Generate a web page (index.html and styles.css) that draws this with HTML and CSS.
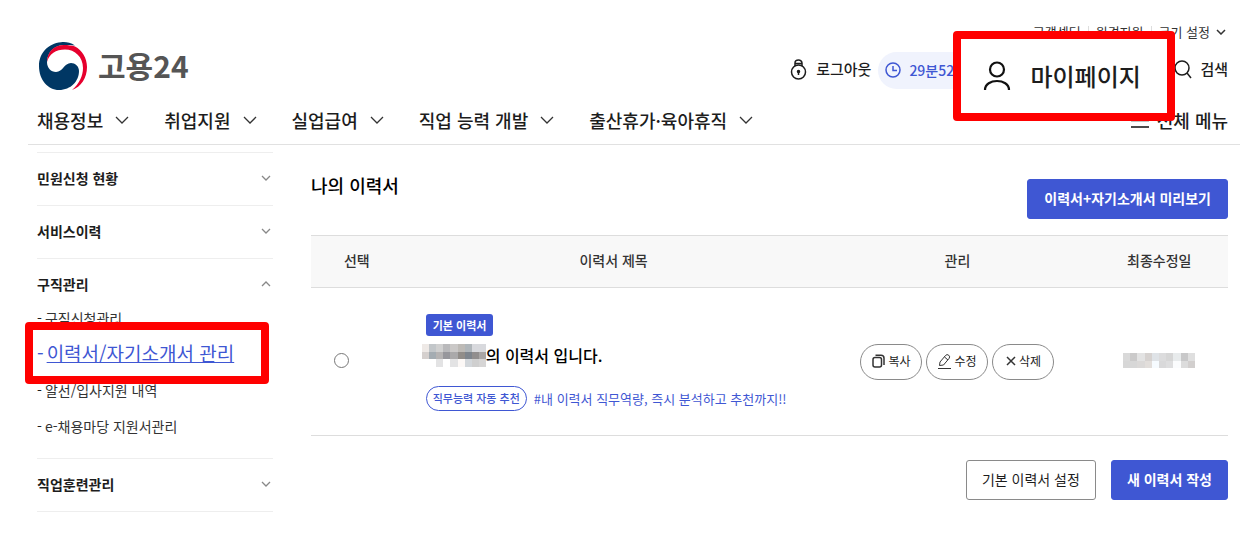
FILE: index.html
```html
<!DOCTYPE html>
<html lang="ko">
<head>
  <meta charset="UTF-8">
  <meta name="viewport" content="width=device-width, initial-scale=1.0">
  <title>고용24 - 이력서/자기소개서 관리</title>

  <link rel="stylesheet" href="styles.css">

</head>
<body>
  <header class="header">
    <ul class="util">
      <li><a href="#">고객센터</a></li>
      <li><a href="#">원격지원</a></li>
      <li>
        <button type="button" class="util-size">크기 설정
          <svg width="10" height="6" viewBox="0 0 10 6"><path d="M1 1l4 4 4-4"/></svg>
        </button>
      </li>
    </ul>

    <div class="header-main">
      <a href="#" class="logo">
        <svg width="48" height="48" viewBox="0 0 48 48">
          <path fill="#003764" d="M36 3.500C31 0 26-.2 22 .2 9 1.500 0 11 0 24c0 14 9 24 20 24 12 0 20-9 20-19 0-5-4-8-8-8-7 0-8 9-15 9-5 0-9-4-9-10C8 10 16 3 25 3c4 0 8 0 11 .5z"/>
          <path fill="#e6002d" d="M8 20C8 10 15 3 25 3c4 0 8 .5 11 1.500C43 8 48 16 48 25c0 11-6 20-15 23 7-6 11-14 11-22C44 15 36 7.500 26 7.500 17 7.500 10 12 8 20z"/>
        </svg>
        <span>고용24</span>
      </a>

      <ul class="tools">
        <li>
          <a href="#" class="tool">
            <svg class="line" width="17" height="21" viewBox="0 0 17 21"><circle cx="8.500" cy="13" r="7"/><path d="M5 7V4a3.500 3 0 0 1 7 0v3M5 4.500h7M8.500 13v3"/><circle cx="8.500" cy="12.500" r="1" fill="#1d1d1d"/></svg>
            로그아웃
          </a>
        </li>
        <li class="timer">
          <svg width="16" height="16" viewBox="0 0 16 16"><circle cx="8" cy="8" r="7"/><path d="M8 4v4.500h4"/></svg>
          <span>29분52초</span>
        </li>
        <li class="mypage">
          <a href="#" class="marker mypage-link">
            <svg width="28" height="30" viewBox="0 0 28 30"><circle cx="14" cy="8.500" r="7"/><path d="M2 29c0-12 24-12 24 0"/></svg>
            마이페이지
          </a>
        </li>
        <li>
          <a href="#" class="tool search">
            <svg class="line" width="17" height="19" viewBox="0 0 17 19"><circle cx="7" cy="8" r="7"/><path d="M12 13l4 5"/></svg>
            검색
          </a>
        </li>
      </ul>
    </div>

    <nav class="gnb">
      <a href="#">채용정보 <svg width="14" height="8" viewBox="0 0 14 8"><path d="M1 1l6 6 6-6"/></svg></a>
      <a href="#">취업지원 <svg width="14" height="8" viewBox="0 0 14 8"><path d="M1 1l6 6 6-6"/></svg></a>
      <a href="#">실업급여 <svg width="14" height="8" viewBox="0 0 14 8"><path d="M1 1l6 6 6-6"/></svg></a>
      <a href="#">직업 능력 개발 <svg width="14" height="8" viewBox="0 0 14 8"><path d="M1 1l6 6 6-6"/></svg></a>
      <a href="#">출산휴가·육아휴직 <svg width="14" height="8" viewBox="0 0 14 8"><path d="M1 1l6 6 6-6"/></svg></a>
      <button type="button" class="all-menu">
        <svg width="18" height="16" viewBox="0 0 18 16"><path d="M0 2h18M0 8.500h18M0 15h18"/></svg>
        전체 메뉴
      </button>
    </nav>
  </header>

  <div class="page">
    <aside class="side">
      <div class="side-group">
        <button type="button" class="side-title">민원신청 현황 <svg width="10" height="6" viewBox="0 0 10 6"><path d="M1 1l4 4 4-4"/></svg></button>
      </div>
      <div class="side-group">
        <button type="button" class="side-title">서비스이력 <svg width="10" height="6" viewBox="0 0 10 6"><path d="M1 1l4 4 4-4"/></svg></button>
      </div>
      <div class="side-group">
        <button type="button" class="side-title">구직관리 <svg width="10" height="6" viewBox="0 0 10 6"><path d="M1 5l4-4 4 4"/></svg></button>
        <ul class="side-list">
          <li><a href="#">구직신청관리</a></li>
          <li class="current"><div class="marker side-marker"><a href="#">이력서/자기소개서 관리</a></div></li>
          <li><a href="#">알선/입사지원 내역</a></li>
          <li><a href="#">e-채용마당 지원서관리</a></li>
        </ul>
      </div>
      <div class="side-group">
        <button type="button" class="side-title">직업훈련관리 <svg width="10" height="6" viewBox="0 0 10 6"><path d="M1 1l4 4 4-4"/></svg></button>
      </div>
    </aside>

    <main class="content">
      <div class="content-head">
        <h2>나의 이력서</h2>
        <button type="button" class="btn btn-primary">이력서+자기소개서 미리보기</button>
      </div>

      <table class="resume-table">
        <colgroup>
          <col class="col-select">
          <col class="col-title">
          <col class="col-manage">
          <col class="col-date">
        </colgroup>
        <thead>
          <tr>
            <th>선택</th>
            <th>이력서 제목</th>
            <th>관리</th>
            <th>최종수정일</th>
          </tr>
        </thead>
        <tbody>
          <tr>
            <td class="cell-select"><input type="radio" name="resume" aria-label="이력서 선택"></td>
            <td class="cell-title">
              <span class="badge">기본 이력서</span>
              <p class="resume-name">
                <svg width="64" height="23" viewBox="0 0 9 3" preserveAspectRatio="none" shape-rendering="crispEdges">
                  <path fill="#eee9e6" d="M0 0h1v1h-1z"/><path fill="#c2c6c9" d="M1 0h1v1h-1z"/><path fill="#d0d0d0" d="M2 0h1v1h-1z"/><path fill="#b9b9bb" d="M3 0h1v1h-1z"/><path fill="#cac8c7" d="M4 0h1v1h-1z"/><path fill="#bdbab6" d="M5 0h1v1h-1z"/><path fill="#b0b6ba" d="M6 0h1v1h-1z"/><path fill="#d8d9dd" d="M7 0h2v1h-2z"/>
                  <path fill="#d5d0ce" d="M0 1h1v1h-1z"/><path fill="#a4acb2" d="M1 1h1v1h-1z"/><path fill="#b5b3b3" d="M2 1h1v1h-1z"/><path fill="#97979c" d="M3 1h1v1h-1z"/><path fill="#aaa9aa" d="M4 1h1v1h-1z"/><path fill="#918d89" d="M5 1h1v1h-1z"/><path fill="#7e858d" d="M6 1h1v1h-1z"/><path fill="#918e8e" d="M7 1h1v1h-1z"/><path fill="#a9a6a5" d="M8 1h1v1h-1z"/>
                  <path fill="#e3e3e4" d="M2 2h1v1h-1zM4 2h1v1h-1z"/><path fill="#fcf8f6" d="M5 2h1v1h-1z"/><path fill="#d3d7db" d="M6 2h1v1h-1z"/><path fill="#cfcfcf" d="M7 2h1v1h-1z"/><path fill="#d6d5d5" d="M8 2h1v1h-1z"/>
                </svg>의 이력서 입니다.
              </p>
              <div class="recommend">
                <button type="button" class="recommend-btn">직무능력 자동 추천</button>
                <span>#내 이력서 직무역량, 즉시 분석하고 추천까지!!</span>
              </div>
            </td>
            <td>
              <div class="actions">
                <button type="button" class="pill">
                  <svg width="13" height="14" viewBox="0 0 13 14"><rect x="1" y="3.500" width="8.500" height="9.500" rx="2"/><path d="M3.500 1.200H9a3 3 0 0 1 3 3V11"/></svg>복사
                </button>
                <button type="button" class="pill">
                  <svg class="thin" width="13" height="15" viewBox="0 0 13 15"><path d="M1.500 11.500l.5-3.500 5.500-6.500a2 2 0 0 1 3.500 3L5.500 11zM6.500 3l3.500 3M0 14.500h13"/></svg>수정
                </button>
                <button type="button" class="pill">
                  <svg class="delete" width="10" height="10" viewBox="0 0 10 10"><path d="M1 1l8 8M9 1L1 9"/></svg>삭제
                </button>
              </div>
            </td>
            <td>
              <svg class="masked-date" width="72" height="15" viewBox="0 0 10 2" preserveAspectRatio="none" shape-rendering="crispEdges">
                <path fill="#d9d9d9" d="M0 0h1v1h-1z"/><path fill="#cbcaca" d="M1 0h1v1h-1z"/><path fill="#e3e3e3" d="M2 0h1v1h-1z"/><path fill="#d6d2d0" d="M3 0h1v1h-1z"/><path fill="#dfe3e7" d="M4 0h1v1h-1z"/><path fill="#dcdcdd" d="M5 0h1v1h-1z"/><path fill="#d6d6d6" d="M6 0h1v1h-1z"/><path fill="#e8ebec" d="M7 0h1v1h-1z"/><path fill="#c8c8c9" d="M8 0h1v1h-1z"/><path fill="#dfdfdf" d="M9 0h1v1h-1z"/>
                <path fill="#d7d7d7" d="M0 1h2v1h-2z"/><path fill="#dbd9d8" d="M2 1h1v1h-1z"/><path fill="#e2dedb" d="M3 1h1v1h-1z"/><path fill="#f6fbff" d="M4 1h1v1h-1z"/><path fill="#d9d9da" d="M5 1h1v1h-1z"/><path fill="#dededf" d="M6 1h1v1h-1z"/><path fill="#fbfcfd" d="M7 1h1v1h-1z"/><path fill="#dcdcdc" d="M8 1h1v1h-1z"/><path fill="#d2cfce" d="M9 1h1v1h-1z"/>
              </svg>
            </td>
          </tr>
        </tbody>
      </table>

      <div class="content-foot">
        <button type="button" class="btn">기본 이력서 설정</button>
        <button type="button" class="btn btn-primary">새 이력서 작성</button>
      </div>
    </main>
  </div>
</body>
</html>
```
FILE: styles.css
```css
* {
  box-sizing: border-box;
}
body {
  margin: 0;
  font-family: "Noto Sans CJK KR", sans-serif;
  font-size: 14px;
  line-height: 20px;
  color: #1d1d1d;
  background: #fff;
}
ul {
  margin: 0;
  padding: 0;
  list-style: none;
}
a {
  color: inherit;
  text-decoration: none;
}
button {
  margin: 0;
  padding: 0;
  border: none;
  background: none;
  font: inherit;
  color: inherit;
  cursor: pointer;
}
svg {
  flex: none;
  fill: none;
  stroke: #333;
}
/* red frame round the steps of the guide */
.marker {
  position: absolute;
  z-index: 1;
  display: flex;
  align-items: center;
  border: 8px solid #f00;
  border-radius: 4px;
  background: #fff;
  white-space: nowrap;
}

/* header */
.header {
  margin: 0 9px 0 28px;
  padding: 22px 12px 0 9px;
  border-bottom: 1px solid #e1e1e1;
}
.util {
  display: flex;
  justify-content: flex-end;
  font-size: 13px;
  color: #333;
}
.util li + li {
  margin-left: 7px;
  padding-left: 8px;
  background: linear-gradient(#ddd, #ddd) left center / 1px 12px no-repeat;
}
.util-size {
  display: flex;
  align-items: center;
  gap: 6px;
  padding-right: 2px;
}
.util-size svg {
  stroke-width: 1.5;
}
.header-main {
  display: flex;
  justify-content: space-between;
  align-items: flex-end;
  height: 48px;
  margin-bottom: 6px;
}
.logo {
  display: flex;
  align-items: center;
  gap: 11px;
  height: 48px;
  padding-left: 2px;
  font-size: 30px;
  font-weight: 700;
  color: #555;
}
.logo svg {
  stroke: none;
}
.logo span {
  padding-bottom: 2px;
}
.tools {
  display: flex;
  align-items: center;
  height: 38px;
  margin-bottom: 1px;
}
.tool {
  display: flex;
  align-items: center;
  gap: 9px;
  padding-bottom: 2px;
  font-size: 15px;
  font-weight: 500;
}
.search {
  gap: 8px;
}
.tool .line {
  overflow: visible;
  stroke: #1d1d1d;
  stroke-width: 1.5;
}
.timer {
  display: flex;
  align-items: center;
  gap: 8px;
  width: 75px;
  height: 37px;
  margin-left: 7px;
  padding: 0 0 1px 7px;
  border-radius: 19px 0 0 19px;
  background: #f0f3fd;
  font-weight: 500;
  color: #3f57d3;
  white-space: nowrap;
}
.timer svg {
  stroke: #3f57d3;
  stroke-width: 1.5;
}
.mypage {
  position: relative;
  width: 222px;
  height: 38px;
}
.mypage-link {
  top: -20px;
  left: 0;
  gap: 19px;
  width: 222px;
  height: 90px;
  padding-left: 22px;
  font-size: 24px;
  font-weight: 500;
}
.mypage-link svg {
  stroke: #111;
  stroke-width: 2.2;
}
.gnb {
  display: flex;
  align-items: center;
  gap: 35px;
  height: 48px;
  padding-bottom: 1px;
  font-size: 18px;
  font-weight: 500;
}
.gnb a, .all-menu {
  display: flex;
  align-items: center;
  gap: 12px;
}
.gnb svg {
  stroke-width: 1.3;
}
.all-menu {
  gap: 8px;
  margin-left: auto;
}
.all-menu svg {
  stroke: #111;
  stroke-width: 1.5;
}

/* body */
.page {
  display: flex;
  gap: 38px;
  padding: 7px 21px 28px 37px;
}
.side {
  flex: none;
  align-self: flex-start;
  width: 236px;
  border-bottom: 1px solid #eee;
}
.side-group {
  border-top: 1px solid #eee;
}
.side-title {
  display: flex;
  justify-content: space-between;
  align-items: center;
  width: 100%;
  height: 52px;
  padding: 0 2px 3px 0;
  font-weight: 700;
}
.side-title svg {
  stroke: #888;
  stroke-width: 1.3;
}
.side-list {
  margin-top: -3px;
  padding-bottom: 6px;
}
.side-list li {
  position: relative;
  height: 36px;
  line-height: 20px;
}
.side-list a {
  color: #333;
}
.side-list li::before, .side-marker::before {
  content: "-";
  margin-right: 3px;
}
.side-list .current::before {
  content: none;
}
.side-marker {
  top: -22px;
  left: -12px;
  width: 244px;
  height: 62px;
  padding-left: 4px;
  font-size: 19px;
  line-height: 24px;
  color: #3f57d3;
}
.side-marker a {
  color: #3f57d3;
  text-decoration: underline;
}
.content {
  flex: 1;
}
.content-head {
  display: flex;
  justify-content: space-between;
  align-items: flex-end;
  height: 67px;
}
h2 {
  margin: 0;
  height: 46px;
  font-size: 18px;
  font-weight: 500;
  line-height: 24px;
  color: #000;
}
.btn {
  height: 40px;
  padding: 0 16px 3px;
  border: 1px solid #8a8a8a;
  border-radius: 3px;
  background: #fff;
}
.btn-primary {
  border-color: #3f57d3;
  background: #3f57d3;
  font-weight: 700;
  color: #fff;
}
.resume-table {
  width: 100%;
  margin-top: 16px;
  border-collapse: collapse;
  table-layout: fixed;
}
.col-select {
  width: 10%;
}
.col-title {
  width: 46%;
}
.col-manage {
  width: 29%;
}
.col-date {
  width: 15%;
}
th {
  height: 52px;
  padding: 0 0 3px;
  border-top: 1px solid #ddd;
  border-bottom: 1px solid #ddd;
  background: #f8f8f8;
  font-weight: 500;
  color: #333;
}
td {
  height: 148px;
  padding: 0;
  border-bottom: 1px solid #ddd;
  text-align: center;
}
.cell-select {
  padding-bottom: 3px;
}
.cell-title {
  padding: 2px 0 0 23px;
  text-align: left;
}
input[type="radio"] {
  appearance: none;
  display: block;
  width: 15px;
  height: 15px;
  margin: 0 0 0 23px;
  border: 1px solid #777;
  border-radius: 50%;
}
.badge {
  display: inline-block;
  padding: 0 7px;
  border-radius: 3px;
  background: #3f57d3;
  font-size: 11px;
  font-weight: 700;
  line-height: 22px;
  color: #fff;
}
.resume-name {
  display: flex;
  align-items: center;
  margin: 7px 0 19px -4px;
  font-size: 16px;
  font-weight: 500;
  line-height: 24px;
  color: #000;
}
.resume-name svg, .masked-date {
  stroke: none;
}
.recommend {
  display: flex;
  align-items: center;
  gap: 7px;
  font-size: 13px;
  color: #3f57d3;
}
.recommend-btn {
  height: 25px;
  padding: 0 6px 1px;
  border: 1px solid #3f57d3;
  border-radius: 13px;
  font-size: 11px;
  font-weight: 500;
}
.actions {
  display: flex;
  justify-content: center;
  gap: 4px;
}
.pill {
  display: flex;
  justify-content: center;
  align-items: center;
  gap: 3px;
  width: 62px;
  height: 36px;
  padding-bottom: 1px;
  border: 1px solid #8a8a8a;
  border-radius: 18px;
  font-size: 12px;
}
.pill svg {
  stroke-width: 1.5;
}
.pill .thin {
  stroke-width: 1;
}
.content-foot {
  display: flex;
  justify-content: flex-end;
  gap: 15px;
  margin-top: 24px;
}
.content-foot .btn {
  padding: 0 15px 3px;
}
```
